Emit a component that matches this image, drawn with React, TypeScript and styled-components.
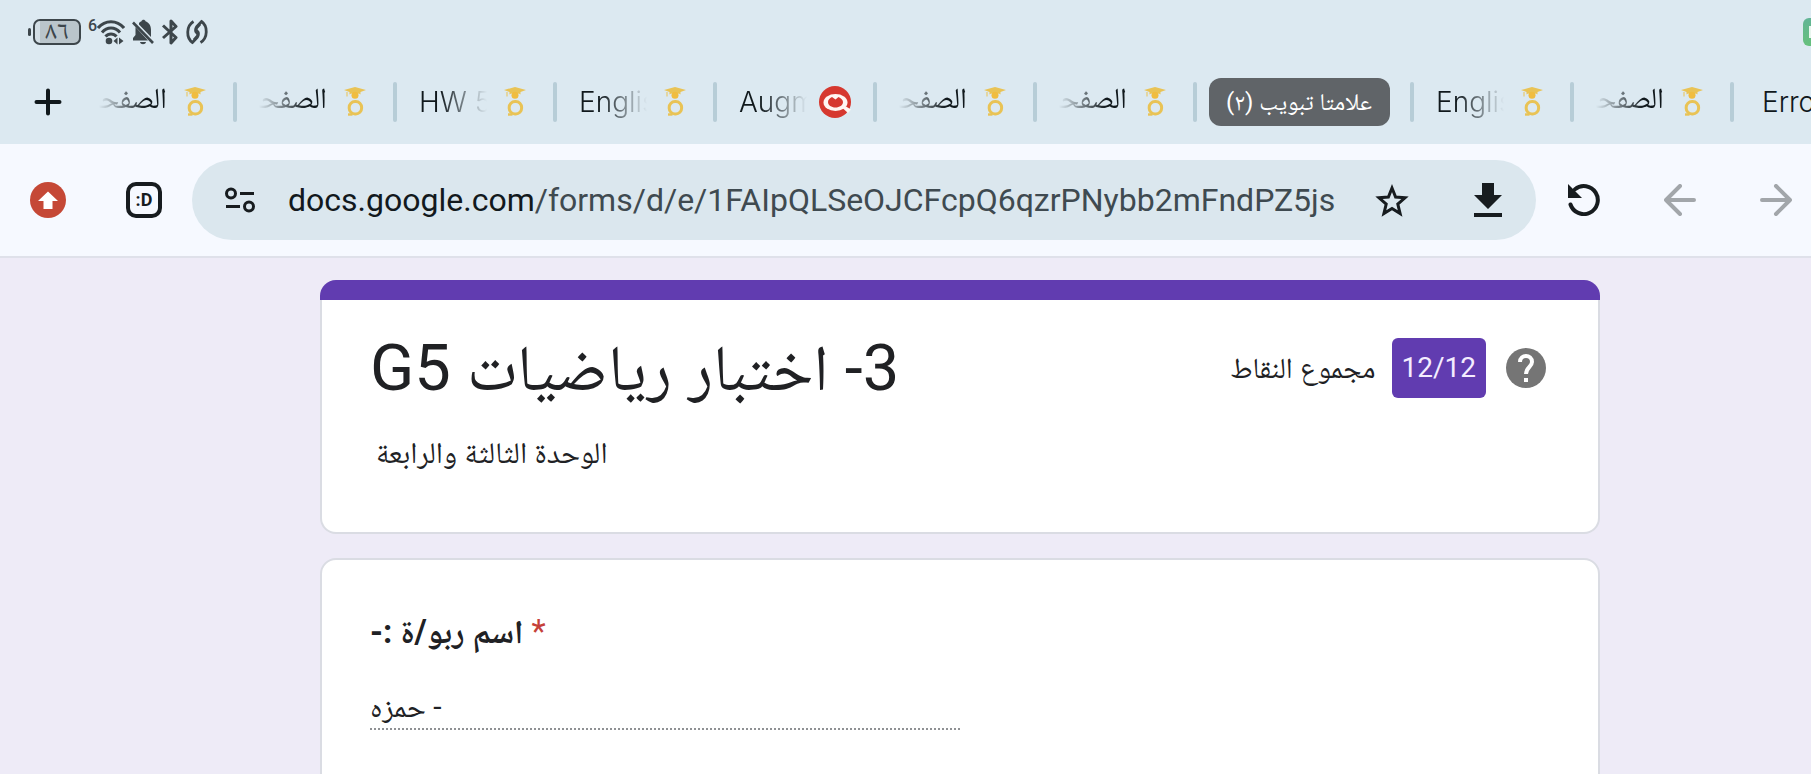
import React from "react";
import styled, { createGlobalStyle } from "styled-components";

const naskh = '"Noto Naskh Arabic", "Noto Sans Arabic", "DejaVu Sans"';

const GlobalStyle = createGlobalStyle`
  *, *::before, *::after { box-sizing: border-box; }
  html, body { margin: 0; padding: 0; }
  body {
    font-family: Roboto, ${naskh}, sans-serif;
    color: #202124;
    background: #eeebf7;
  }
  button { border: 0; padding: 0; margin: 0; background: none; color: inherit; font: inherit; cursor: pointer; }
  svg { display: block; }
`;

const Screen = styled.div`
  display: flex;
  flex-direction: column;
  height: 100vh;
  overflow: hidden;
`;

/* ---------- status bar ---------- */

const StatusBar = styled.header`
  flex: none;
  display: flex;
  align-items: center;
  gap: 7px;
  height: 64px;
  padding-left: 28px;
  background: #dce9f1;
  color: #3d464b;
`;

const Battery = styled.div`
  display: flex;
  align-items: center;
  gap: 2px;
`;

const BatteryTip = styled.span`
  width: 3px;
  height: 8px;
  border-radius: 2px;
  background: #3d464b;
`;

const BatteryBody = styled.span`
  width: 48px;
  height: 26px;
  border: 2px solid #3d464b;
  border-radius: 7px;
  background: linear-gradient(90deg, #d3dee5 5px, #bac5cb 5px);
  font-size: 26px;
  line-height: 18px;
  text-align: center;
`;

const StatusIcon = styled.svg<{ $w: number }>`
  flex: none;
  width: ${(p) => p.$w}px;
  height: 26px;
`;

const Wifi = styled.div`
  display: flex;
  font-size: 16px;
  font-weight: 500;
  line-height: 14px;
`;

const Recorder = styled.span`
  flex: none;
  display: flex;
  align-items: center;
  width: 8px;
  height: 28px;
  margin-left: auto;
  padding-left: 6px;
  border-radius: 6px 0 0 6px;
  background: linear-gradient(#62b596, #66c07c);

  &::after {
    content: "";
    width: 2px;
    height: 12px;
    background: #e8f6ee;
  }
`;

/* ---------- tab strip ---------- */

const TabStrip = styled.nav`
  flex: none;
  display: flex;
  align-items: center;
  height: 80px;
  padding-bottom: 4px;
  background: #dce9f1;
  overflow: hidden;
`;

const NewTab = styled.button`
  flex: none;
  width: 77px;
  height: 56px;
  padding-left: 34px;
`;

const Separator = styled.span`
  flex: none;
  width: 4px;
  height: 40px;
  border-radius: 2px;
  background: #b7cdd7;
`;

const Tab = styled.button<{ $wide: boolean }>`
  flex: none;
  display: flex;
  align-items: center;
  gap: 12px;
  height: 56px;
  padding: 0 22px 0 ${(p) => (p.$wide ? 28 : 22)}px;
  color: #10181c;
`;

const TabTitle = styled.span<{ $rtl: boolean; $fade: boolean }>`
  width: ${(p) => (p.$fade ? "68px" : "auto")};
  padding-bottom: ${(p) => (p.$rtl ? 8 : 0)}px;
  overflow: hidden;
  white-space: nowrap;
  text-align: start;
  font-family: Inter, ${naskh}, sans-serif;
  font-size: ${(p) => (p.$rtl ? 29 : 28)}px;
  font-weight: ${(p) => (p.$rtl ? 400 : 300)};
  line-height: 48px;
  mask-image: ${(p) =>
    p.$fade ? `linear-gradient(to ${p.$rtl ? "left" : "right"}, #000 30%, transparent 100%)` : "none"};
`;

const TabGroup = styled.button`
  flex: none;
  height: 48px;
  margin: 0 20px 0 12px;
  padding: 0 18px 0 17px;
  border-radius: 12px;
  background: #606468;
  color: #fff;
  font-size: 24px;
  line-height: 44px;
`;

/* ---------- address bar ---------- */

const Toolbar = styled.div`
  flex: none;
  display: flex;
  align-items: center;
  height: 114px;
  border-bottom: 2px solid #dfe1ea;
  background: #f6f9ff;
  color: #171c1f;
`;

const ToolButton = styled.button`
  flex: none;
  display: flex;
  align-items: center;
  justify-content: center;
  width: 96px;
  height: 80px;
`;

const TabCount = styled.span`
  display: flex;
  align-items: center;
  justify-content: center;
  width: 36px;
  height: 36px;
  border: 4px solid #171c1f;
  border-radius: 10px;
  font-size: 18px;
  font-weight: 700;
  line-height: 20px;
`;

const AddressBar = styled.div`
  flex: 1;
  min-width: 0;
  display: flex;
  align-items: center;
  height: 80px;
  border-radius: 40px;
  background: #dbe7ee;
`;

const Url = styled.a`
  flex: 1;
  min-width: 0;
  overflow: hidden;
  white-space: nowrap;
  color: #3f4a50;
  font-size: 32px;
  line-height: 48px;
  text-decoration: none;
`;

const Host = styled.span`
  color: #12191d;
`;

const AddressActions = styled.div`
  display: flex;
  margin-left: 4px;
`;

const History = styled.div`
  flex: none;
  display: flex;
  gap: 64px;
  padding: 0 19px 0 32px;
`;

const HistoryButton = styled.button<{ $off?: boolean }>`
  width: 32px;
  height: 32px;
  color: ${(p) => (p.$off ? "#a2a6aa" : "#171c1f")};
`;

/* ---------- form ---------- */

const Page = styled.main`
  flex: 1;
  min-height: 0;
  display: flex;
  flex-direction: column;
  gap: 24px;
  padding: 22px 211px 0 320px;
  overflow-y: auto;
  scrollbar-width: none;
`;

const Card = styled.section<{ $accent?: boolean }>`
  flex: none;
  padding: ${(p) => (p.$accent ? "0 0 59px" : "52px 48px 80px")};
  border: 2px solid #dadce3;
  border-top-width: ${(p) => (p.$accent ? 0 : 2)}px;
  border-radius: 16px;
  background: ${(p) =>
    p.$accent
      ? "linear-gradient(#613cb0 20px, #fff 20px) padding-box, linear-gradient(#613cb0 20px, #dadce3 20px) border-box"
      : "#fff"};
  ${(p) => p.$accent && "border-color: transparent;"}
`;

const CardHead = styled.div`
  display: flex;
  align-items: center;
  justify-content: space-between;
  padding: 44px 52px 0 48px;
`;

const Title = styled.h1`
  margin: 0;
  font-size: 65px;
  font-weight: 400;
  line-height: 88px;
`;

const Score = styled.div`
  display: flex;
  align-items: center;
  font-size: 28px;
  line-height: 40px;
`;

const ScoreLabel = styled.bdi`
  font-size: 29px;
`;

const Points = styled.span`
  margin: 0 20px 0 16px;
  padding: 10px;
  border-radius: 6px;
  background: #613cb0;
  color: #f4ecff;
`;

const Description = styled.p`
  margin: 21px 0 0 54px;
  font-size: 30px;
  line-height: 40px;
`;

const QuestionTitle = styled.label`
  display: block;
  font-size: 33px;
  font-weight: 700;
  line-height: 40px;
`;

const Required = styled.span`
  color: #c5413a;
  font-weight: 400;
`;

const Answer = styled.input`
  display: block;
  width: 50%;
  height: 42px;
  margin-top: 36px;
  padding: 4px 0 0;
  border: 0;
  border-bottom: 2px dotted #8f9194;
  outline: 0;
  background: none;
  color: #202124;
  font: inherit;
  font-size: 30px;
  text-align: left;
`;

/* ---------- icons ---------- */

const GraduateIcon = () => (
  <svg width="32" height="32" viewBox="0 0 32 32" fill="none" stroke="#e9c355">
    <path d="M5 4 16 1l11 3-5.500 2v2.500c-3-2-8-2-11 0V6z" fill="#e9c355" stroke="none" />
    <circle cx="16" cy="9.300" r="3.500" fill="#f0bd3f" stroke="none" />
    <path d="M8 6v4.500" strokeWidth="1" />
    <rect x="10.200" y="15.500" width="12.400" height="12.500" rx="5.800" strokeWidth="3" />
    <path d="M9 28.500h4.500" strokeWidth="2.400" />
  </svg>
);

const EyeIcon = () => (
  <svg width="32" height="32" viewBox="0 0 32 32">
    <circle cx="16" cy="16" r="16" fill="#d6382f" />
    <ellipse cx="16.500" cy="16.500" rx="12" ry="8.500" fill="#fff6f2" />
    <path d="M24 22.500l5 4.500 3-3.500-5-3z" fill="#fff6f2" />
    <path d="M9 16c0-2 1.500-4 4-5l3.500 2.500 3-2.500c2.500 1 4.500 3 4.500 5 0 3.200-3.500 5.500-7.500 5.500S9 19.200 9 16z" fill="#d6382f" />
  </svg>
);

const WifiIcon = () => (
  <StatusIcon $w={28} viewBox="0 0 28 26" fill="none" stroke="currentColor" strokeWidth="3">
    <path d="M1 9c7-8.500 19-8.500 26 0M5 13.500c5-6 13-6 18 0M8.500 17.500c3-3.500 8-3.500 11 0" />
    <circle cx="12" cy="22" r="3.300" fill="currentColor" stroke="none" />
    <path d="M16.500 22l4-3.500v7zM22 18.500l4.500 3.500-4.500 3.500z" fill="currentColor" stroke="none" />
  </StatusIcon>
);

const BellOffIcon = () => (
  <StatusIcon $w={22} viewBox="0 0 22 26" fill="currentColor">
    <path d="M7 4c1-1 2-1.500 2.500-1.700C10 .3 13 .3 13.500 2.300 18 4 19 8 19 11v7L7 5.500z" />
    <path d="M3.500 8 16 21.500H1v-2.500l2.500-3z" />
    <path d="M8 23h6c-.5 3-5.500 3-6 0z" />
    <path d="M1 3.500 21 24" stroke="currentColor" strokeWidth="2.600" />
  </StatusIcon>
);

const BluetoothIcon = () => (
  <StatusIcon $w={18} viewBox="0 0 18 26" fill="none" stroke="currentColor" strokeWidth="3" strokeLinejoin="round">
    <path d="M2 6.500l13 12-5 5.500V2l5 5.500-13 11.500" />
  </StatusIcon>
);

const NfcIcon = () => (
  <StatusIcon $w={22} viewBox="0 0 22 26" fill="none" stroke="currentColor" strokeWidth="2.800">
    <path d="M7.500 2.500C0 7 0 19 6.500 23.500l5-5.500c1.500-2 .5-3-1-4.500s-1-3 0-4.500l3.500-4" />
    <path d="M14.500 23.500c7.500-4.500 7.500-16.500 1-21l-5 5.500c-1.500 2-.5 3 1 4.500s1 3 0 4.500l-3.500 4" />
  </StatusIcon>
);

const PlusIcon = () => (
  <svg width="28" height="28" viewBox="0 0 28 28" stroke="#10181c" strokeWidth="4" strokeLinecap="round">
    <path d="M14 2.500v23M2.500 14h23" />
  </svg>
);

const UpdateIcon = () => (
  <svg width="36" height="36" viewBox="0 0 36 36">
    <circle cx="18" cy="18" r="18" fill="#c54836" />
    <path d="M18 9.500 28 19h-5.500v8h-9v-8H8z" fill="#fff" />
  </svg>
);

const SiteInfoIcon = () => (
  <svg width="32" height="26" viewBox="0 0 32 26" fill="none" stroke="#171c1f" strokeWidth="3">
    <circle cx="7" cy="6.500" r="4.500" />
    <path d="M16 6.500h14M2 19.500h14" />
    <circle cx="25" cy="19.500" r="4.500" />
  </svg>
);

const StarIcon = () => (
  <svg width="34" height="34" viewBox="0 0 34 34" fill="none" stroke="#171c1f" strokeWidth="3">
    <path d="M17 5l3.600 9 9.400.8-7.200 6.200 2.300 9.600L17 25.500l-8.100 5.100 2.300-9.600L4 14.800l9.400-.8z" />
  </svg>
);

const DownloadIcon = () => (
  <svg width="28" height="34" viewBox="0 0 28 34" fill="#171c1f">
    <path d="M8 0h12v12h8L14 26 0 12h8zM0 30h28v4H0z" />
  </svg>
);

const ReloadIcon = () => (
  <svg width="32" height="32" viewBox="0 0 32 32" fill="none" stroke="currentColor" strokeWidth="4">
    <path d="M2.500 20.500A14 14 0 1 0 7 5.200" strokeLinecap="round" />
    <path d="M0 0v14h14z" fill="currentColor" stroke="none" />
  </svg>
);

const BackIcon = () => (
  <svg width="32" height="32" viewBox="0 0 32 32" fill="none" stroke="currentColor" strokeWidth="4" strokeLinecap="round" strokeLinejoin="round">
    <path d="M30 16H2M16 2 2 16l14 14" />
  </svg>
);

const ForwardIcon = () => (
  <svg width="32" height="32" viewBox="0 0 32 32" fill="none" stroke="currentColor" strokeWidth="4" strokeLinecap="round" strokeLinejoin="round">
    <path d="M2 16h28M16 2l14 14-14 14" />
  </svg>
);

const HelpIcon = () => (
  <svg width="40" height="40" viewBox="0 0 40 40">
    <circle cx="20" cy="20" r="20" fill="#757575" />
    <path d="M14 14c0-8 12-8 12 0 0 4.500-6 5.500-6 12" fill="none" stroke="#fff" strokeWidth="4" />
    <path d="M18 30h4v4h-4z" fill="#fff" />
  </svg>
);

/* ---------- page ---------- */

type TabInfo = { title: string; rtl?: boolean; icon?: "eye" | "graduate" };

const arabicTab: TabInfo = { title: "الصفحة", rtl: true, icon: "graduate" };

const tabsBefore: TabInfo[] = [
  arabicTab,
  arabicTab,
  { title: "HW 5", icon: "graduate" },
  { title: "English", icon: "graduate" },
  { title: "Augment", icon: "eye" },
  arabicTab,
  arabicTab,
];

const tabsAfter: TabInfo[] = [{ title: "English", icon: "graduate" }, arabicTab, { title: "Error" }];

const BrowserTab = ({ title, rtl = false, icon }: TabInfo) => (
  <Tab type="button" $wide={!icon}>
    <TabTitle dir={rtl ? "rtl" : "ltr"} $rtl={rtl} $fade={Boolean(icon)}>
      {title}
    </TabTitle>
    {icon === "graduate" && <GraduateIcon />}
    {icon === "eye" && <EyeIcon />}
  </Tab>
);

export default function App() {
  return (
    <Screen>
      <GlobalStyle />
      <StatusBar>
        <Battery>
          <BatteryTip />
          <BatteryBody>٨٦</BatteryBody>
        </Battery>
        <Wifi>
          6<WifiIcon />
        </Wifi>
        <BellOffIcon />
        <BluetoothIcon />
        <NfcIcon />
        <Recorder />
      </StatusBar>

      <TabStrip>
        <NewTab type="button" aria-label="New tab">
          <PlusIcon />
        </NewTab>
        {tabsBefore.map((tab, i) => (
          <React.Fragment key={i}>
            <BrowserTab {...tab} />
            <Separator />
          </React.Fragment>
        ))}
        <TabGroup type="button" dir="rtl">
          علامتا تبويب (٢)
        </TabGroup>
        {tabsAfter.map((tab, i) => (
          <React.Fragment key={i}>
            <Separator />
            <BrowserTab {...tab} />
          </React.Fragment>
        ))}
      </TabStrip>

      <Toolbar>
        <ToolButton type="button" aria-label="Update">
          <UpdateIcon />
        </ToolButton>
        <ToolButton type="button" aria-label="Open tabs">
          <TabCount>:D</TabCount>
        </ToolButton>
        <AddressBar>
          <ToolButton type="button" aria-label="Site information">
            <SiteInfoIcon />
          </ToolButton>
          <Url href="#">
            <Host>docs.google.com</Host>/forms/d/e/1FAIpQLSeOJCFcpQ6qzrPNybb2mFndPZ5js
          </Url>
          <AddressActions>
            <ToolButton type="button" aria-label="Bookmark">
              <StarIcon />
            </ToolButton>
            <ToolButton type="button" aria-label="Download">
              <DownloadIcon />
            </ToolButton>
          </AddressActions>
        </AddressBar>
        <History>
          <HistoryButton type="button" aria-label="Reload">
            <ReloadIcon />
          </HistoryButton>
          <HistoryButton type="button" aria-label="Back" $off>
            <BackIcon />
          </HistoryButton>
          <HistoryButton type="button" aria-label="Forward" $off>
            <ForwardIcon />
          </HistoryButton>
        </History>
      </Toolbar>

      <Page>
        <Card $accent>
          <CardHead>
            <Title>
              <bdi dir="rtl">3- اختبار رياضيات G5</bdi>
            </Title>
            <Score>
              <ScoreLabel dir="rtl">مجموع النقاط</ScoreLabel>
              <Points>12/12</Points>
              <HelpIcon />
            </Score>
          </CardHead>
          <Description>
            <bdi dir="rtl">الوحدة الثالثة والرابعة</bdi>
          </Description>
        </Card>

        <Card>
          <QuestionTitle htmlFor="student-name">
            <bdi dir="rtl">اسم ربو/ة :-</bdi> <Required>*</Required>
          </QuestionTitle>
          <Answer id="student-name" dir="rtl" defaultValue="- حمزه" readOnly />
        </Card>
      </Page>
    </Screen>
  );
}
